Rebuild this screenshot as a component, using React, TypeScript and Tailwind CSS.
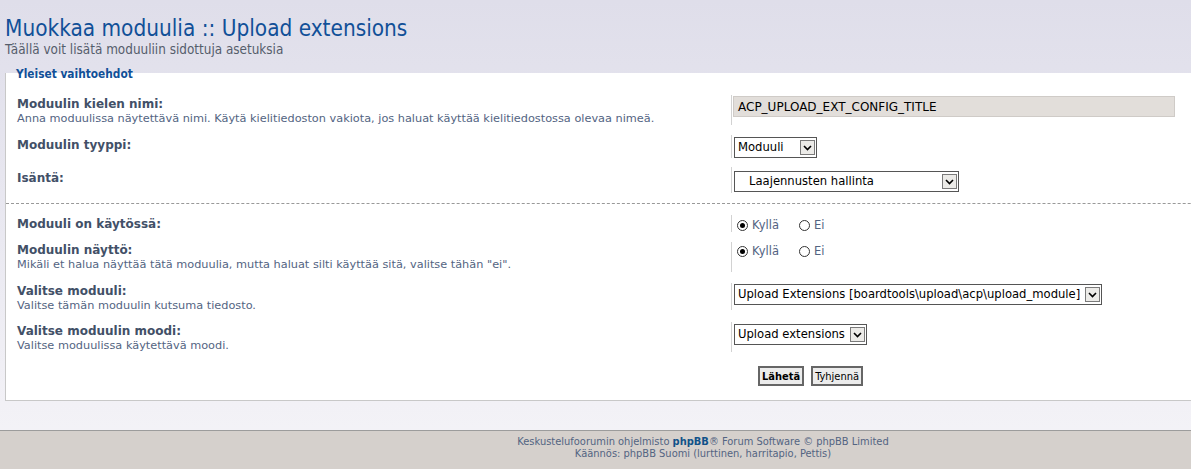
import React from "react";

const COND = { fontFamily: '"DejaVu Sans Condensed", "DejaVu Sans", sans-serif' };
const SANS = { fontFamily: '"DejaVu Sans", sans-serif' };

function Chevron() {
  return (
    <span className="flex h-[15px] w-[15px] items-center justify-center border border-[#7a7a7a] bg-[#ecebe8]">
      <svg width="9" height="6" viewBox="0 0 9 6">
        <path d="M1 1 L4.5 4.5 L8 1" fill="none" stroke="#000" strokeWidth="1.6" />
      </svg>
    </span>
  );
}

function Select({ text, w, pad = "pl-[3px]" }: { text: string; w: string; pad?: string }) {
  return (
    <div className={`ml-[1px] flex h-[21px] items-center justify-between border border-[#555] bg-white pr-[1px] ${w}`}>
      <span className={`text-[11.6px] text-black ${pad} leading-none whitespace-nowrap`} style={SANS}>
        {text}
      </span>
      <Chevron />
    </div>
  );
}

function Radio({ checked }: { checked?: boolean }) {
  return (
    <span className="flex h-[11px] w-[11px] items-center justify-center rounded-full border border-[#333] bg-white">
      {checked && <span className="h-[5px] w-[5px] rounded-full bg-black" />}
    </span>
  );
}

function Radios() {
  return (
    <div className="ml-[4px] flex items-center text-[11.5px] leading-[14px] text-[#536482]" style={SANS}>
      <Radio checked />
      <span className="ml-[4px]">Kyllä</span>
      <span className="ml-[20px]" />
      <Radio />
      <span className="ml-[4px]">Ei</span>
    </div>
  );
}

function Row({
  label,
  desc,
  children,
  h,
  mt,
  lpt,
  cpt,
}: {
  label: string;
  desc?: string;
  children: React.ReactNode;
  h: string;
  mt: string;
  lpt: string;
  cpt: string;
}) {
  return (
    <div className={`flex ${h} ${mt}`}>
      <div className={`w-[725px] pl-[11px] ${lpt}`} style={SANS}>
        <div className="text-[12px] font-bold leading-[14px] text-[#425067]">{label}</div>
        {desc && <div className="text-[11.3px] leading-[15px] text-[#536482]">{desc}</div>}
      </div>
      <div className={`border-l border-[#d2d2d2] pl-[1px] ${cpt}`}>{children}</div>
    </div>
  );
}

export default function App() {
  return (
    <div className="h-[469px] w-full overflow-hidden" style={COND}>
      <div className="w-[1406px] bg-gradient-to-b from-[#dfdeea] to-[#f5f4f8]">
        <div className="px-[5px] pt-[15px]">
          <h1 className="text-[22.4px] leading-[27px] text-[#115098]">Muokkaa moduulia :: Upload extensions</h1>
          <p className="text-[13.4px] leading-[16px] text-[#555d6b]">Täällä voit lisätä moduuliin sidottuja asetuksia</p>
        </div>
        <div className="relative ml-[5px] mr-[5px] mt-[15px] border-b border-l border-[#c8c8c8] bg-white pb-[14px]">
          <div className="absolute -top-[6px] left-[10px] text-[11.8px] font-bold leading-[14px] text-[#115098]">
            Yleiset vaihtoehdot
          </div>
          <div className="pt-[22px]">
            <Row
              label="Moduulin kielen nimi:"
              desc="Anna moduulissa näytettävä nimi. Käytä kielitiedoston vakiota, jos haluat käyttää kielitiedostossa olevaa nimeä."
              h="h-[30px]"
              mt="mt-0"
              lpt="pt-[2px]"
              cpt="pt-[1px]"
            >
              <div
                className="flex h-[21px] w-[442px] items-center border border-[#cfcbc7] bg-[#e2deda] pl-[4px] text-[12px] leading-none text-black"
                style={SANS}
              >
                ACP_UPLOAD_EXT_CONFIG_TITLE
              </div>
            </Row>
            <Row label="Moduulin tyyppi:" h="h-[23px]" mt="mt-[10px]" lpt="pt-[3px]" cpt="pt-[2px]">
              <Select text="Moduuli" w="w-[83px]" />
            </Row>
            <Row label="Isäntä:" h="h-[26px]" mt="mt-[9px]" lpt="pt-[4px]" cpt="pt-[4px]">
              <Select text="Laajennusten hallinta" w="w-[225px]" pad="pl-[14px]" />
            </Row>
            <div className="mt-[10px] border-t border-dashed border-[#999]" />
            <Row label="Moduuli on käytössä:" h="h-[17px]" mt="mt-[11px]" lpt="pt-[2px]" cpt="pt-[3px]">
              <Radios />
            </Row>
            <Row
              label="Moduulin näyttö:"
              desc='Mikäli et halua näyttää tätä moduulia, mutta haluat silti käyttää sitä, valitse tähän "ei".'
              h="h-[30px]"
              mt="mt-[10px]"
              lpt="pt-[1px]"
              cpt="pt-[2px]"
            >
              <Radios />
            </Row>
            <Row
              label="Valitse moduuli:"
              desc="Valitse tämän moduulin kutsuma tiedosto."
              h="h-[27px]"
              mt="mt-[11px]"
              lpt="pt-[1px]"
              cpt="pt-[1px]"
            >
              <Select text="Upload Extensions [boardtools\upload\acp\upload_module]" w="w-[368px]" />
            </Row>
            <Row
              label="Valitse moduulin moodi:"
              desc="Valitse moduulissa käytettävä moodi."
              h="h-[30px]"
              mt="mt-[12px]"
              lpt="pt-[2px]"
              cpt="pt-[2px]"
            >
              <Select text="Upload extensions" w="w-[133px]" />
            </Row>
            <div className="mt-[14px] flex gap-[7px] pl-[752px]">
              <button className="h-[20px] border-2 border-[#666] bg-[#ececec] px-[2px] text-[11px] font-bold leading-none text-black">
                Lähetä
              </button>
              <button className="h-[20px] border-2 border-[#666] bg-[#ececec] px-[2px] text-[11px] leading-none text-black">
                Tyhjennä
              </button>
            </div>
          </div>
        </div>
        <div className="h-[29px]" />
        <div className="h-[39px] border-t border-[#9c9c9c] bg-[#d5d0cc] pt-[5px] text-center text-[11px] leading-[12px] text-[#536482]">
          <div>
            Keskustelufoorumin ohjelmisto <span className="font-bold text-[#105289]">phpBB</span>® Forum Software © phpBB Limited
          </div>
          <div>Käännös: phpBB Suomi (lurttinen, harritapio, Pettis)</div>
        </div>
      </div>
    </div>
  );
}
